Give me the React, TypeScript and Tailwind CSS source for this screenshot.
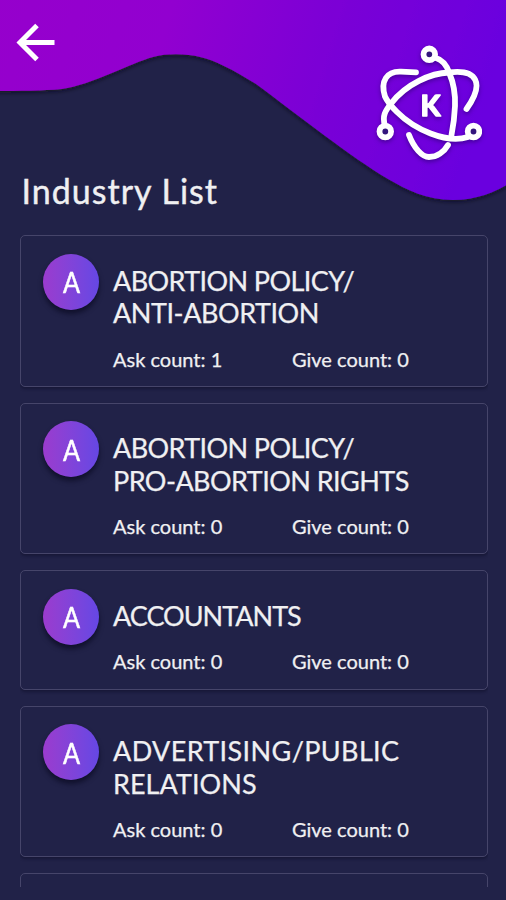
import * as React from 'react';

interface Industry {
  id: number;
  lines: { text: string; spacing: string }[];
  ask: number;
  give: number;
}

const industries: Industry[] = [
  {
    id: 1,
    lines: [
      { text: 'ABORTION POLICY/', spacing: 'tracking-[-0.6px]' },
      { text: 'ANTI-ABORTION', spacing: 'tracking-[-0.45px]' },
    ],
    ask: 1,
    give: 0,
  },
  {
    id: 2,
    lines: [
      { text: 'ABORTION POLICY/', spacing: 'tracking-[-0.6px]' },
      { text: 'PRO-ABORTION RIGHTS', spacing: 'tracking-[-0.55px]' },
    ],
    ask: 0,
    give: 0,
  },
  {
    id: 3,
    lines: [{ text: 'ACCOUNTANTS', spacing: 'tracking-[-1px]' }],
    ask: 0,
    give: 0,
  },
  {
    id: 4,
    lines: [
      { text: 'ADVERTISING/PUBLIC', spacing: 'tracking-[0.38px]' },
      { text: 'RELATIONS', spacing: 'tracking-[0.05px]' },
    ],
    ask: 0,
    give: 0,
  },
];

const Wave: React.FC = () => (
  <svg
    viewBox="0 0 506 215"
    className="absolute left-0 top-0 w-[506px] h-[215px]"
    aria-hidden="true"
  >
    <defs>
      <linearGradient id="wave" x1="0" y1="0" x2="1" y2="0.12">
        <stop offset="0" stopColor="#9600cc" />
        <stop offset="0.35" stopColor="#9200d0" />
        <stop offset="0.68" stopColor="#7a00d6" />
        <stop offset="1" stopColor="#6a00df" />
      </linearGradient>
      <filter id="waveShadow" x="-5%" y="-5%" width="110%" height="115%">
        <feDropShadow dx="0" dy="1.5" stdDeviation="2" floodColor="#08081c" floodOpacity="0.8" />
      </filter>
    </defs>
    <path
      d="M-10 -10H516V179C497 192 477 200 453 200C427 200 407 190 388 179C351 157 299 116 256 84C233 70 215 60 200 57C188 54 168 53 153 57C131 63 91 85 62 89C42 91 18 91 -10 91Z"
      fill="url(#wave)"
      filter="url(#waveShadow)"
    />
  </svg>
);

const BackArrow: React.FC = () => (
  <svg viewBox="0 0 40 40" className="w-10 h-10" fill="none" stroke="#fff" strokeWidth="5">
    <path d="M39.500 20.500H5M22 3.500L5 20.500L22 37.500" />
  </svg>
);

const Logo: React.FC = () => (
  <svg
    viewBox="0 0 112 120"
    className="w-[112px] h-[120px] drop-shadow-[0_2px_2px_rgba(30,0,90,0.5)]"
    fill="none"
    stroke="#fff"
    strokeWidth="5.8"
    strokeLinecap="round"
  >
    <path d="M66 14C73 16 77 22 79.300 29C84 40 85.500 50 85 62C84.500 73 83.500 81 81.500 91" />
    <path d="M15 82C12 72 15 67 21.500 59C36 40 61 29 79 28.500C107 25 115 39 96.500 65" />
    <path d="M98 93C76 100 44 85 27 68C22 63 17 57 15 52.500C10 37 17 27 31 27.700L46 28.300" />
    <path d="M39 91C44 104 52 113 59 113C67 113 74 108 78 101" />
    <circle cx="59.300" cy="10.300" r="5.800" fill="#33157d" />
    <circle cx="15.300" cy="87.500" r="5.800" fill="#33157d" />
    <circle cx="103.500" cy="87.500" r="5.800" fill="#33157d" />
    <text
      x="50.500"
      y="71.500"
      fill="#fff"
      strokeWidth="1.6"
      strokeLinejoin="round"
      fontFamily="Lato, sans-serif"
      fontWeight="700"
      fontSize="29"
    >
      K
    </text>
  </svg>
);

const IndustryCard: React.FC<{ industry: Industry }> = ({ industry }) => {
  return (
    <div className="flex shrink-0 rounded-[5px] border border-[#46456a] pl-[22px] pt-[17.500px] pb-[13.200px] shadow-[0_2px_3px_rgba(10,10,35,0.45)]">
      <div className="flex h-14 w-14 shrink-0 items-center justify-center rounded-full bg-linear-to-r from-[#9b3bce] to-[#6547e4] pt-px text-[28px] text-white shadow-[0_4px_5px_rgba(5,5,25,0.6)]">
        <span className="scale-x-90 [-webkit-text-stroke:0.500px_white]">A</span>
      </div>
      <div className="ml-3.5 flex-1">
        <div className="pt-[11px] text-[27px] leading-[32.500px] whitespace-nowrap [-webkit-text-stroke:0.250px_#f0f0f2]">
          {industry.lines.map((line) => (
            <div key={line.text}>
              <span className={line.spacing}>{line.text}</span>
            </div>
          ))}
        </div>
        <div className="mt-[15px] flex text-[20px] leading-[28px] whitespace-nowrap [-webkit-text-stroke:0.250px_#f0f0f2]">
          <div className="w-[179px]">Ask count: {industry.ask}</div>
          <div>Give count: {industry.give}</div>
        </div>
      </div>
    </div>
  );
};

const App: React.FC = () => {
  return (
    <div className="relative flex h-[900px] w-[506px] flex-col overflow-hidden bg-[#212248] font-[Lato,sans-serif] text-[#f0f0f2]">
      <Wave />
      <header className="relative flex h-[170px] shrink-0 items-start justify-between pl-[15px] pr-[24px]">
        <button type="button" aria-label="Back" className="mt-[22px]">
          <BackArrow />
        </button>
        <div className="mt-[44px]">
          <Logo />
        </div>
      </header>
      <h1 className="relative h-[65px] shrink-0 pl-[21.500px] text-[34px] leading-[41px] tracking-[1px] [-webkit-text-stroke:0.400px_#f0f0f2]">
        Industry List
      </h1>
      <main className="mx-5 mr-[18px] flex h-[651.500px] flex-col gap-4 overflow-hidden">
        {industries.map((industry) => (
          <IndustryCard key={industry.id} industry={industry} />
        ))}
        <div className="h-10 shrink-0 rounded-t-[5px] border border-[#46456a]" />
      </main>
    </div>
  );
};

export default App;
